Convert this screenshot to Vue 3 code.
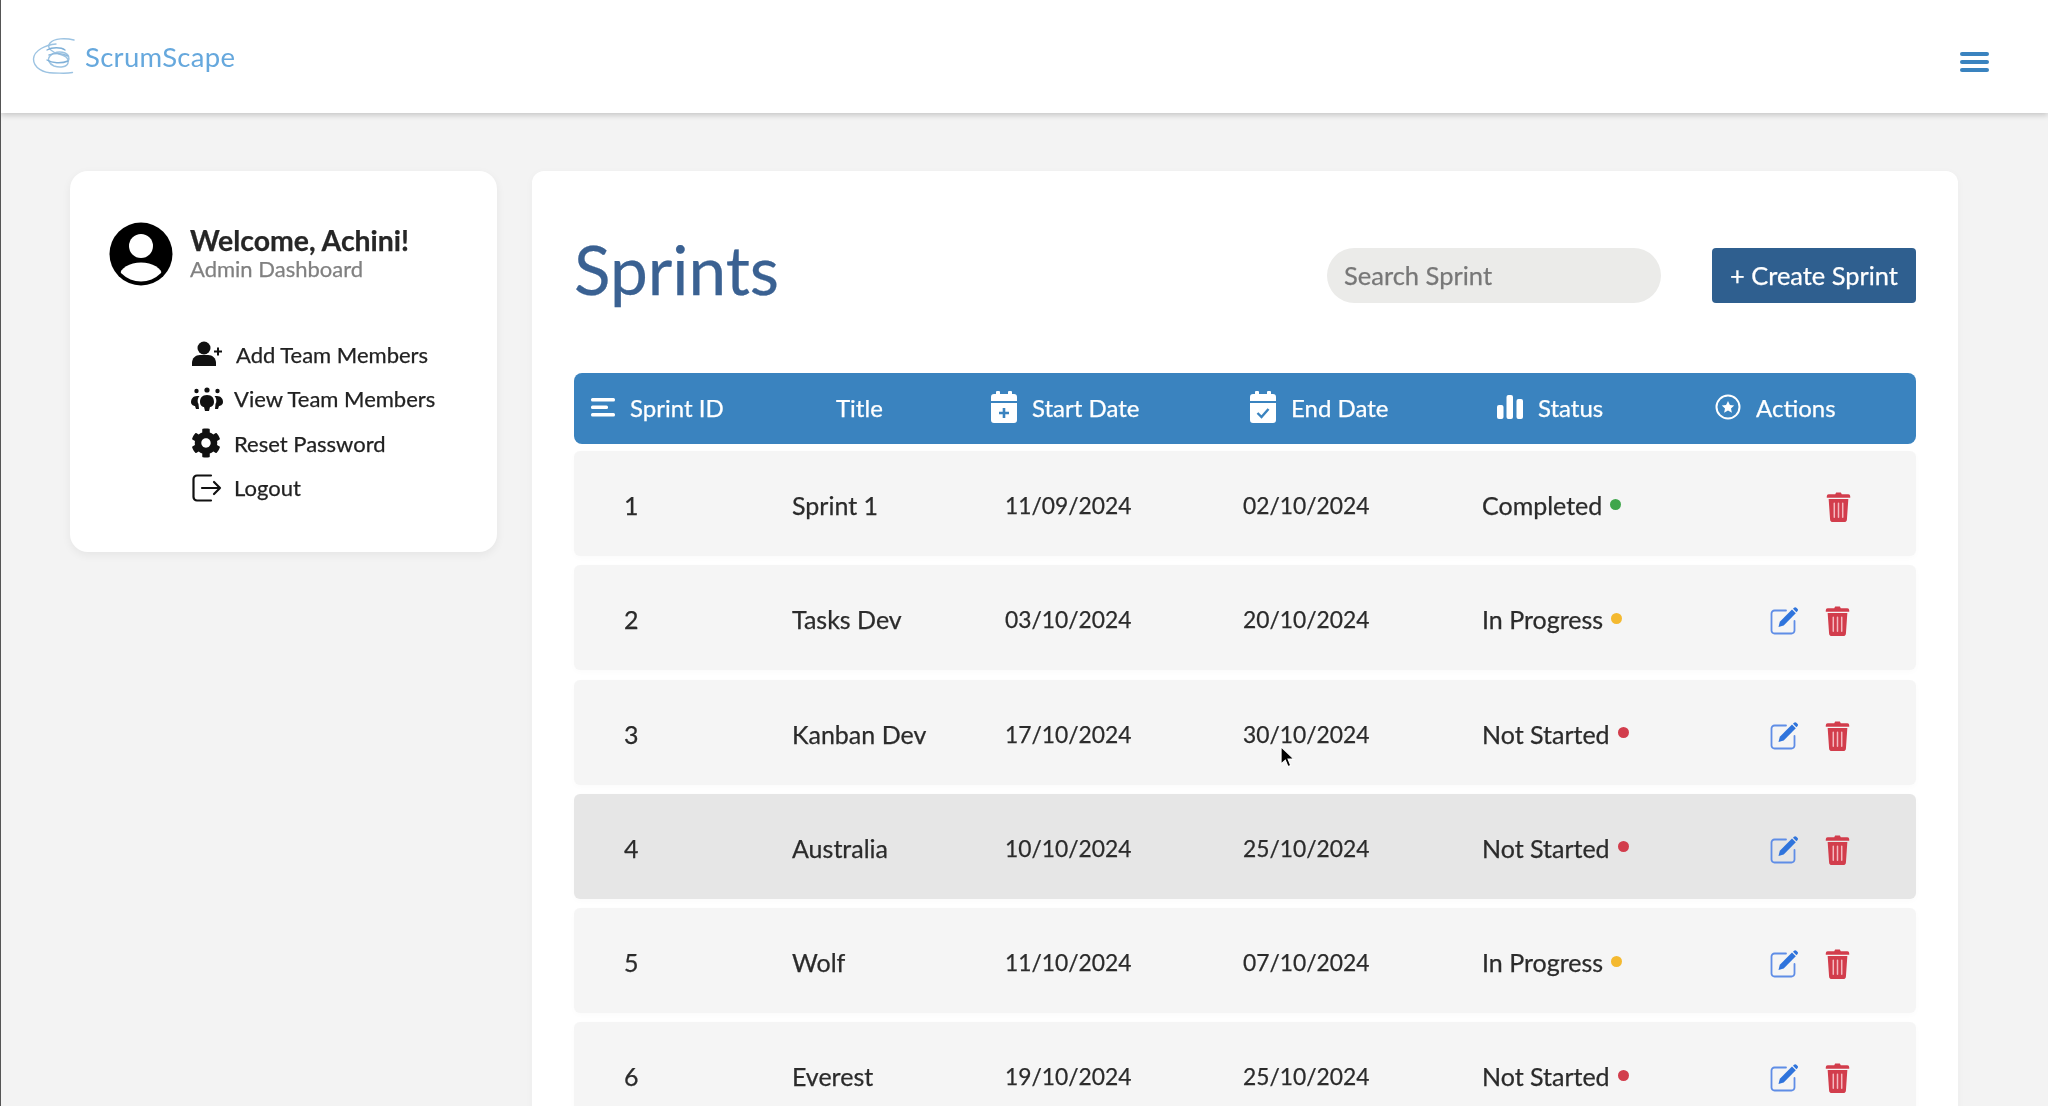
<script setup>
const rows = [
  { id: 1, title: 'Sprint 1', start: '11/09/2024', end: '02/10/2024', status: 'Completed', color: 'green', edit: false },
  { id: 2, title: 'Tasks Dev', start: '03/10/2024', end: '20/10/2024', status: 'In Progress', color: 'amber', edit: true },
  { id: 3, title: 'Kanban Dev', start: '17/10/2024', end: '30/10/2024', status: 'Not Started', color: 'red', edit: true },
  { id: 4, title: 'Australia', start: '10/10/2024', end: '25/10/2024', status: 'Not Started', color: 'red', edit: true, hover: true },
  { id: 5, title: 'Wolf', start: '11/10/2024', end: '07/10/2024', status: 'In Progress', color: 'amber', edit: true },
  { id: 6, title: 'Everest', start: '19/10/2024', end: '25/10/2024', status: 'Not Started', color: 'red', edit: true },
]
</script>

<template>
  <div class="page">
    <header class="topbar">
      <div class="brand">
        <svg class="logo" viewBox="0 0 48 40" fill="none" stroke="#9cc3e2" stroke-width="1.400" stroke-linecap="round">
          <path d="M24 7C14 8 2 13 1.500 22c0 9 10 14 20 14 7 0 12 1 19-.5" />
          <path d="M42 3C34 1 22 1 18 6c-4 5 2 9 9 11 6 2 10 3 9 9-1 4-8 5-14 3-5-2-7-7-4-10 3-4 10-5 15-3 4 2 5 5 3 9" />
          <path d="M15 13c5-3 14-3 18 0M15 23c5 3 14 4 21 1" stroke="#7fb0d8" />
          <path d="M17 18c6-2 13-2 19 1" stroke="#8fb9dc" />
        </svg>
        <span class="brand-name">ScrumScape</span>
      </div>
      <div class="burger"><i></i><i></i><i></i></div>
    </header>

    <div class="content">
      <aside class="side">
        <div class="who">
          <svg class="avatar" viewBox="0 0 64 64">
            <defs><clipPath id="disc"><circle cx="32" cy="32" r="27.500" /></clipPath></defs>
            <circle cx="32" cy="32" r="31.500" fill="#000" />
            <g clip-path="url(#disc)" fill="#fff">
              <circle cx="32" cy="24" r="12" />
              <ellipse cx="32" cy="53" rx="21" ry="12.500" />
            </g>
          </svg>
          <div>
            <div class="welcome">Welcome, Achini!</div>
            <div class="role">Admin Dashboard</div>
          </div>
        </div>
        <nav class="menu">
          <a class="item add">
            <svg class="mi" viewBox="0 0 32 26">
              <circle cx="13" cy="7" r="6.500" />
              <path d="M1 25v-3c0-5 3.500-8 8-8h8c4.500 0 8 3 8 8v3z" />
              <path d="M27 6.500v8M23 10.500h8" stroke="#111" stroke-width="2" fill="none" />
            </svg>
            Add Team Members
          </a>
          <a class="item">
            <svg class="mi" viewBox="0 0 32 26">
              <circle cx="16" cy="4" r="2.600" /><circle cx="5.500" cy="5" r="2.200" /><circle cx="26.500" cy="5" r="2.200" />
              <path d="M16 9c5 0 7 3 7 7 0 4-3 5-4 5l-1 4h-4l-1-4c-1 0-4-1-4-5 0-4 2-7 7-7z" />
              <path d="M6 10c-4 0-6 3-6 6s3 4 4 4l1 3h3l-.500-5c-1.500-2-1-6 1-8zM26 10c4 0 6 3 6 6s-3 4-4 4l-1 3h-3l.500-5c1.500-2 1-6-1-8z" />
            </svg>
            View Team Members
          </a>
          <a class="item">
            <svg class="mi gear" viewBox="0 0 512 512">
              <path d="M487.400 315.700l-42.600-24.600c4.300-23.200 4.300-47 0-70.200l42.600-24.600c4.900-2.800 7.100-8.600 5.500-14-11.100-35.600-30-67.800-54.700-94.600-3.800-4.100-10-5.100-14.800-2.300L380.800 110c-17.900-15.400-38.500-27.300-60.800-35.100V25.800c0-5.600-3.900-10.500-9.400-11.700-36.700-8.200-74.300-7.800-109.200 0-5.500 1.200-9.400 6.100-9.400 11.700V75c-22.200 7.900-42.800 19.800-60.800 35.100L88.700 85.500c-4.900-2.800-11-1.900-14.800 2.300-24.700 26.700-43.600 58.900-54.700 94.600-1.700 5.400.6 11.200 5.500 14L67.300 221c-4.300 23.200-4.300 47 0 70.200l-42.600 24.600c-4.900 2.800-7.100 8.600-5.500 14 11.100 35.600 30 67.800 54.700 94.600 3.800 4.100 10 5.100 14.800 2.300l42.600-24.600c17.900 15.400 38.500 27.300 60.800 35.100v49.200c0 5.600 3.900 10.500 9.400 11.700 36.700 8.200 74.300 7.800 109.200 0 5.500-1.200 9.400-6.100 9.400-11.700v-49.200c22.200-7.900 42.800-19.800 60.800-35.100l42.600 24.600c4.900 2.800 11 1.900 14.800-2.300 24.700-26.700 43.600-58.900 54.700-94.600 1.500-5.500-.7-11.300-5.600-14.100zM256 336c-44.100 0-80-35.900-80-80s35.900-80 80-80 80 35.900 80 80-35.900 80-80 80z" />
            </svg>
            Reset Password
          </a>
          <a class="item">
            <svg class="mi outline" viewBox="0 0 30 28">
              <path d="M19 1.500H5a3.500 3.500 0 0 0-3.500 3.500v18A3.500 3.500 0 0 0 5 26.500h14" />
              <path d="M10 14h18M22 8l6 6-6 6" />
            </svg>
            Logout
          </a>
        </nav>
      </aside>

      <main class="panel">
        <div class="head">
          <h1>Sprints</h1>
          <div class="tools">
            <input class="search" placeholder="Search Sprint" />
            <button class="create">+ Create Sprint</button>
          </div>
        </div>

        <div class="thead">
          <div class="th">
            <svg class="hi lines" viewBox="0 0 24 20" fill="#fff"><rect y="1" width="24" height="3.400" rx="1.500" /><rect y="8.500" width="17" height="3.400" rx="1.500" /><rect y="16" width="24" height="3.400" rx="1.500" /></svg>
            Sprint ID
          </div>
          <div class="th">Title</div>
          <div class="th">
            <svg class="hi cal" viewBox="0 0 26 32" fill="#fff">
              <rect x="5" width="4" height="6" rx="1" /><rect x="17" width="4" height="6" rx="1" />
              <path d="M3 3h20a3 3 0 0 1 3 3v4H0V6a3 3 0 0 1 3-3zM0 12h26v17a3 3 0 0 1-3 3H3a3 3 0 0 1-3-3z" />
              <path d="M13 17v10M8 22h10" stroke="#3a83bf" stroke-width="2.600" />
            </svg>
            Start Date
          </div>
          <div class="th">
            <svg class="hi cal" viewBox="0 0 26 32" fill="#fff">
              <rect x="5" width="4" height="6" rx="1" /><rect x="17" width="4" height="6" rx="1" />
              <path d="M3 3h20a3 3 0 0 1 3 3v4H0V6a3 3 0 0 1 3-3zM0 12h26v17a3 3 0 0 1-3 3H3a3 3 0 0 1-3-3z" />
              <path d="M7.500 22l4 4 7-8" fill="none" stroke="#3a83bf" stroke-width="2.400" />
            </svg>
            End Date
          </div>
          <div class="th">
            <svg class="hi bars" viewBox="0 0 26 24" fill="#fff"><rect y="10" width="6.500" height="14" rx="2" /><rect x="9.500" width="6.500" height="24" rx="2" /><rect x="19.500" y="4" width="6.500" height="20" rx="2" /></svg>
            Status
          </div>
          <div class="th">
            <svg class="hi star" viewBox="0 0 26 26">
              <circle cx="13" cy="13" r="11.500" fill="none" stroke="#fff" stroke-width="2" />
              <path d="M13 7l1.900 4 4.300.5-3.200 3 .9 4.300-3.900-2.200-3.900 2.200.9-4.300-3.200-3 4.300-.5z" fill="#fff" />
            </svg>
            Actions
          </div>
        </div>

        <div class="rows">
          <div v-for="r in rows" :key="r.id" class="row" :class="{ hover: r.hover }">
            <div>{{ r.id }}</div>
            <div>{{ r.title }}</div>
            <div class="date">{{ r.start }}</div>
            <div class="date">{{ r.end }}</div>
            <div class="status">{{ r.status }}<span class="dot" :class="r.color"></span></div>
            <div class="acts" :class="{ solo: !r.edit }">
              <svg v-if="r.edit" class="edit" viewBox="0 0 28 28" fill="none">
                <path d="M24.500 14v9.500a3 3 0 0 1-3 3H4.500a3 3 0 0 1-3-3V6.500a3 3 0 0 1 3-3H16" stroke="#5f8de6" stroke-width="1.800" stroke-linecap="round" />
                <path d="M8.500 20l1.300-5.200L22 2.500l3.800 3.800L13.700 18.600z" fill="#2f74dc" />
                <path d="M24 .8a1.700 1.700 0 0 1 2.400 0l1 1a1.700 1.700 0 0 1 0 2.400l-1 1-3.400-3.400z" fill="#2f74dc" />
              </svg>
              <svg class="trash" viewBox="0 0 25 32">
                <path d="M9 2.500 10 .5h5l1 2h7a2 2 0 0 1 2 2V6H0V4.500a2 2 0 0 1 2-2z" fill="#d23d4c" />
                <path d="M2 7.500h21L21.500 29a3 3 0 0 1-3 3h-12a3 3 0 0 1-3-3z" fill="#d23d4c" />
                <path d="M8 12v15M12.500 12v15M17 12v15" stroke="#f4b9c0" stroke-width="1.600" stroke-linecap="round" />
              </svg>
            </div>
          </div>
        </div>
      </main>
    </div>

    <svg class="cursor" viewBox="0 0 14 22">
      <path d="M1 1v16l4-3.500 2.500 6 2.500-1-2.500-6H13z" fill="#000" stroke="#fff" stroke-width="1" />
    </svg>
  </div>
</template>

<style>
html, body { margin: 0; height: 100%; overflow: hidden; background: #f3f3f3; }
</style>

<style scoped>
.page {
  position: relative;
  height: 1106px;
  overflow: hidden;
  background: #f3f3f3;
  border-left: 1px solid #555;
  box-sizing: border-box;
  font-family: "Lato", "Noto Sans", sans-serif;
  color: #2a2a2a;
  filter: blur(0.5px);
  -webkit-text-stroke: .25px currentColor;
}
.topbar {
  height: 113px;
  background: #fff;
  box-shadow: 0 2px 6px rgba(0, 0, 0, .2);
  display: flex;
  align-items: center;
  justify-content: space-between;
  padding: 0 59px 0 31px;
  box-sizing: border-box;
  position: relative;
}
.brand { display: flex; align-items: center; gap: 5px; }
.logo { width: 48px; height: 40px; }
.brand-name { font-size: 27.500px; color: #66a8dd; letter-spacing: .3px; -webkit-text-stroke: 0; }
.burger { display: flex; flex-direction: column; gap: 4px; width: 29px; margin-top: 10px; }
.burger i { height: 4px; border-radius: 2px; background: #3a83bf; }

.content { display: flex; align-items: flex-start; padding: 58px 90px 0 69px; gap: 35px; }
.side {
  width: 427px;
  height: 381px;
  box-sizing: border-box;
  background: #fff;
  border-radius: 18px;
  box-shadow: 0 3px 10px rgba(0, 0, 0, .06);
  padding: 51px 0 0 39px;
  flex: none;
}
.who { display: flex; gap: 17px; align-items: center; }
.avatar { width: 64px; height: 64px; flex: none; }
.welcome { font-size: 28.400px; font-weight: 700; color: #262626; line-height: 31px; margin-top: -3px; }
.role { font-size: 22px; color: #808080; line-height: 25px; }
.menu { display: flex; flex-direction: column; gap: 12px; margin: 52px 0 0 82px; }
.item { display: flex; align-items: center; gap: 11px; height: 32.500px; font-size: 22px; color: #222; white-space: nowrap; }
.item.add { gap: 13px; }
.mi { width: 32px; height: 28px; fill: #111; flex: none; }
.mi.gear { width: 30px; height: 30px; margin-right: 2px; }
.mi.outline { fill: none; stroke: #111; stroke-width: 2.200; stroke-linecap: round; stroke-linejoin: round; }

.panel {
  flex: 1;
  min-width: 0;
  height: 1000px;
  background: #fff;
  border-radius: 12px;
  box-shadow: 0 2px 10px rgba(0, 0, 0, .03);
  padding: 0 42px;
  box-sizing: border-box;
}
.head { display: flex; justify-content: space-between; align-items: center; height: 202px; }
h1 { margin: -7px 0 0; font-size: 67.500px; font-weight: 400; color: #3a6192; }
.tools { display: flex; gap: 51px; align-items: center; margin-top: 6px; }
.search {
  width: 334px;
  height: 55px;
  box-sizing: border-box;
  border: 0;
  border-radius: 28px;
  background: #ebebe9;
  padding: 0 17px;
  font: 400 25.500px "Lato", sans-serif;
  outline: none;
}
.search::placeholder { color: #777; opacity: 1; }
.create {
  width: 204px;
  height: 55px;
  border: 0;
  border-radius: 4px;
  background: #2f5f8f;
  color: #fff;
  font: 400 25.400px "Lato", sans-serif;
  padding: 0;
}

.thead {
  height: 71px;
  box-sizing: border-box;
  padding-bottom: 3px;
  background: #3a83bf;
  border-radius: 8px;
  display: grid;
  grid-template-columns: 245px 155px 259px 247px 218px 1fr;
  padding-left: 17px;
  align-items: center;
  color: #fff;
  font-size: 24px;
}
.th { display: flex; align-items: center; gap: 15px; white-space: nowrap; }
.hi { flex: none; }
.lines { width: 24px; height: 20px; }
.cal { width: 26px; height: 32px; }
.bars { width: 26px; height: 24px; }
.star { width: 26px; height: 26px; }

.rows { display: flex; flex-direction: column; gap: 9.300px; margin-top: 7px; }
.row {
  height: 105px;
  flex: none;
  box-sizing: border-box;
  padding-top: 3px;
  background: #f5f5f5;
  border-radius: 6px;
  box-shadow: 0 2px 6px rgba(0, 0, 0, .02);
  display: grid;
  grid-template-columns: 168px 213px 238px 239px 288px 1fr;
  padding-left: 50px;
  align-items: center;
  font-size: 25px;
  color: #2b2b2b;
  white-space: nowrap;
}
.row.hover { background: #e6e6e6; }
.date { font-size: 22.800px; }
.status { display: flex; align-items: center; gap: 8px; }
.dot { width: 11px; height: 11px; border-radius: 50%; margin-top: -2px; }
.green { background: #3fa64b; }
.amber { background: #f4b92f; }
.red { background: #d23d4c; }
.acts { display: flex; align-items: center; justify-content: flex-end; gap: 27px; padding-right: 66px; margin-top: 4px; }
.acts.solo { padding-right: 65px; }
.edit { width: 28px; height: 28px; }
.trash { width: 25px; height: 30px; }

.cursor { position: absolute; left: 1279px; top: 745px; width: 15px; height: 25px; }
</style>
